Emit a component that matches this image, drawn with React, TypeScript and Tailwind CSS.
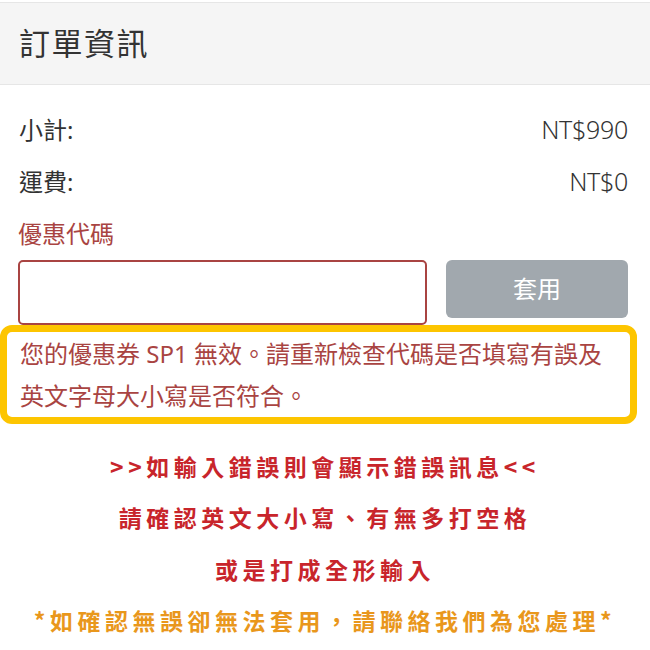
const font = { fontFamily: '"Noto Sans", "Noto Sans CJK TC", sans-serif' }

function Row({ label, value }: { label: string; value: string }) {
  return (
    <div className="flex h-[52px] items-center justify-between pl-[19px] pr-[22px] text-[24px] text-[#333]">
      <span>{label}</span>
      <span className="text-[25px] font-light tracking-[-0.3px]">{value}</span>
    </div>
  )
}

export default function App() {
  return (
    <div className="min-h-[650px] w-[650px] bg-white pt-[2px]" style={font}>
      <div className="flex h-[83px] items-center border-y border-[#e6e6e6] bg-[#f5f5f5] px-[19px]">
        <h2 className="text-[31px] leading-none text-[#333] tracking-[1.5px]">訂單資訊</h2>
      </div>

      <div className="pt-[19px]">
        <Row label="小計:" value="NT$990" />
        <Row label="運費:" value="NT$0" />
        <div className="flex h-[52px] items-center pl-[18px] text-[24px] text-[#a94442]">優惠代碼</div>

        <div className="flex items-start pl-[18px] pr-[22px]">
          <input
            type="text"
            className="h-[65px] w-[409px] rounded-[5px] border-2 border-[#a94442] bg-white px-3 text-[22px] outline-none"
          />
          <button className="ml-auto h-[58px] w-[182px] rounded-[6px] bg-[#a1a8ae] text-[24px] text-white">
            套用
          </button>
        </div>

        <div className="w-[637px] rounded-[12px] border-[7px] border-[#fdc500] pb-0 pl-[13px] pt-[1px] text-[24px] leading-[42px] text-[#a94442]">
          <p>您的優惠券 SP1 無效。請重新檢查代碼是否填寫有誤及</p>
          <p>英文字母大小寫是否符合。</p>
        </div>

        <div
          className="mt-[16px] flex flex-col items-center text-[23px] font-bold tracking-[4.5px]"
          style={{ fontFamily: '"Noto Sans CJK TC", sans-serif' }}
        >
          <p className="flex h-[51.5px] items-center text-[#c8252b]">&gt;&gt;如輸入錯誤則會顯示錯誤訊息&lt;&lt;</p>
          <p className="flex h-[51.5px] items-center text-[#c8252b]">請確認英文大小寫、有無多打空格</p>
          <p className="flex h-[51.5px] items-center text-[#c8252b]">或是打成全形輸入</p>
          <p className="flex h-[51.5px] items-center text-[#e9971c]">*如確認無誤卻無法套用，請聯絡我們為您處理*</p>
        </div>
      </div>
    </div>
  )
}
